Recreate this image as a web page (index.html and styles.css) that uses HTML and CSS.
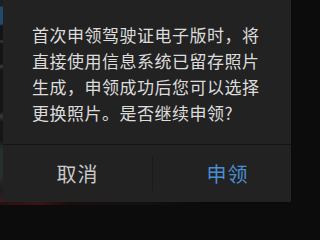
FILE: index.html
```html
<!DOCTYPE html>
<html lang="zh-CN">
<head>
<meta charset="utf-8">
<link rel="stylesheet" href="styles.css">
</head>
<body>
<div class="page">
  <div class="main">
    <div class="edge"></div>
    <div class="dialog">
      <div class="message">首次申领驾驶证电子版时，将直接使用信息系统已留存照片生成，申领成功后您可以选择更换照片。是否继续申领?</div>
      <div class="actions">
        <div class="btn cancel">取消</div>
        <div class="divider"></div>
        <div class="btn confirm">申领</div>
      </div>
    </div>
  </div>
  <div class="bottom"></div>
</div>
</body>
</html>
```
FILE: styles.css
```css
html, body {
  margin: 0;
  padding: 0;
  width: 291px;
  height: 205px;
  overflow: hidden;
  background: #0c0c0c;
}
.page {
  display: flex;
  flex-direction: column;
  width: 291px;
  height: 205px;
  overflow: hidden;
}
.main {
  display: flex;
  height: 202px;
}
.edge {
  flex: 0 0 3px;
  background: linear-gradient(to bottom,
    #1b2026 0px, #1b2026 6px,
    #1f4a6c 7px, #1f4a6c 24px,
    #121416 26px, #121416 40px,
    #3a3a3a 41px, #141414 44px,
    #141414 64px, #3c3c3c 66px, #151515 70px,
    #151515 112px, #3a3a3a 116px, #161616 122px,
    #161616 140px, #28302b 150px, #28302b 175px,
    #1c1c1c 190px, #3a1c1c 202px);
}
.dialog {
  flex: 0 0 299px;
  display: flex;
  flex-direction: column;
  background: #222222;
  font-family: "Noto Sans CJK SC", "Noto Sans", sans-serif;
}
.message {
  padding: 22px 29px 18px 29px;
  font-size: 17px;
  line-height: 26px;
  letter-spacing: 0.5px;
  color: #dcdcdc;
  border-bottom: 1px solid #151515;
}
.actions {
  flex: 1;
  display: flex;
  align-items: center;
}
.btn {
  flex: 1;
  text-align: center;
  font-size: 20px;
  line-height: 57px;
  letter-spacing: 1px;
}
.cancel {
  color: #c9c9c9;
}
.confirm {
  color: #4a8ed2;
}
.divider {
  flex: 0 0 1px;
  height: 35px;
  background: #1a1a1a;
}
.bottom {
  height: 3px;
  background: linear-gradient(to right, #2a1010 0px, #3a1414 40px, #1a0c0c 70px, #101214 140px, #0b0b0b 200px);
}
```
